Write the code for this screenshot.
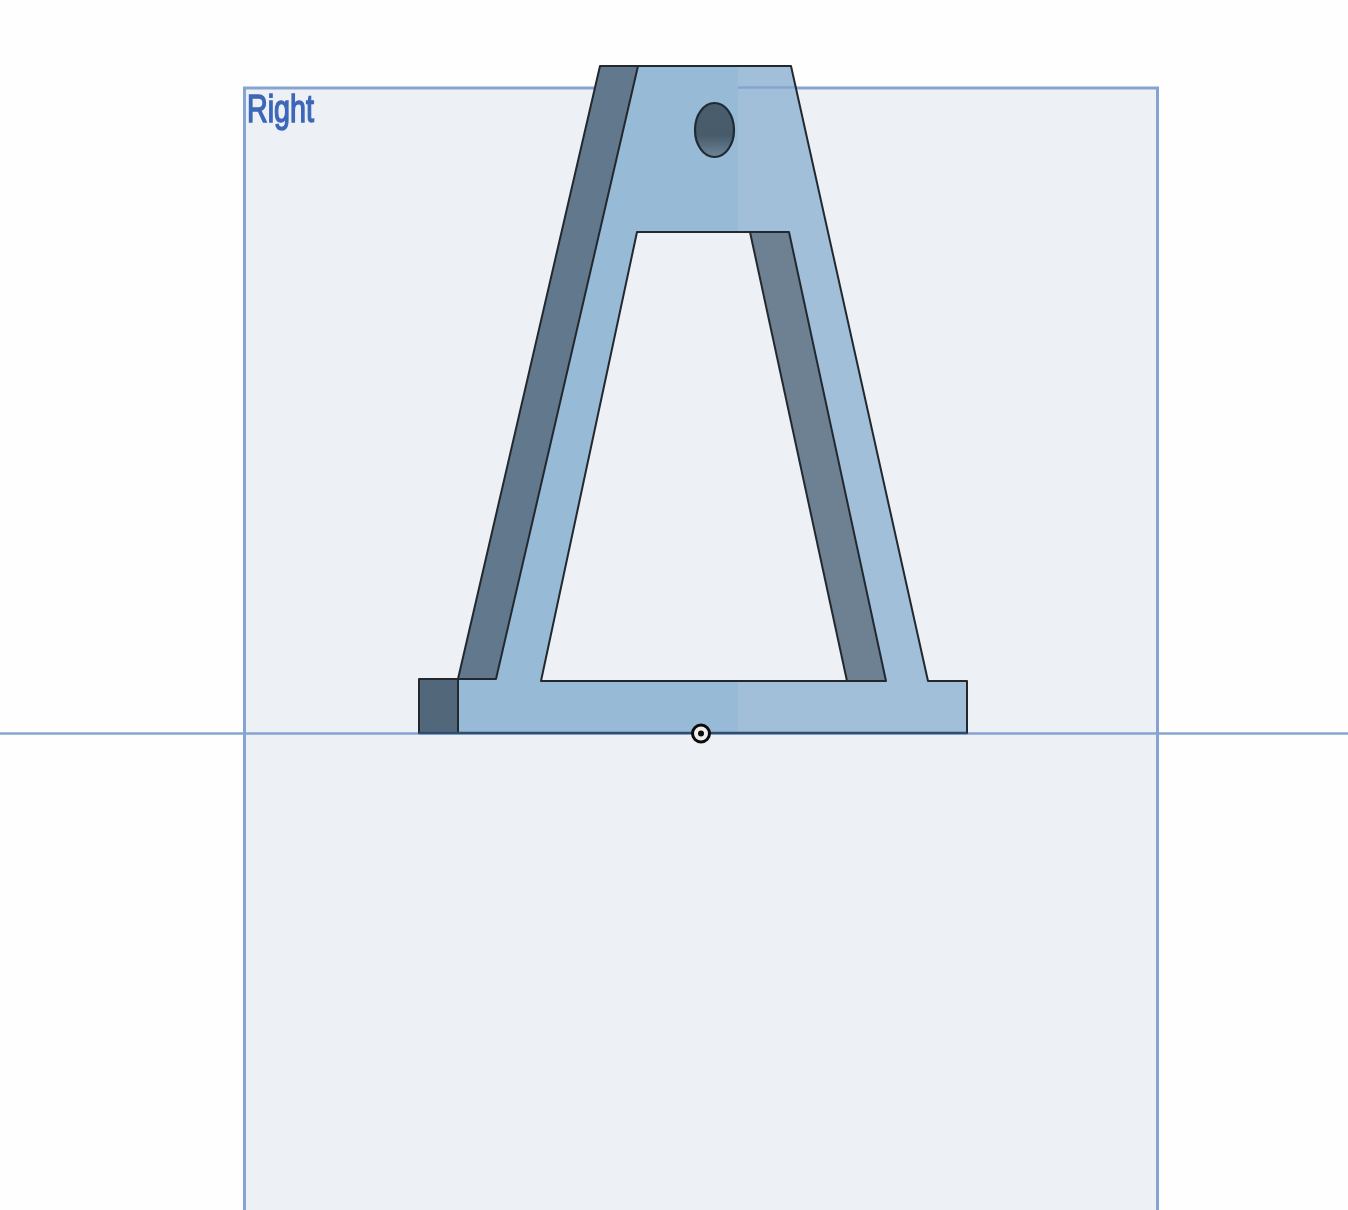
export default function App() {
  return (
    <div className="relative h-[1210px] w-full overflow-hidden bg-[#fefefe]">
      <svg width="1348" height="1210" viewBox="0 0 1348 1210" className="block">
        <defs>
          <filter id="soft" x="-5%" y="-5%" width="110%" height="110%" colorInterpolationFilters="sRGB">
            <feGaussianBlur stdDeviation="0.7" />
          </filter>
          <linearGradient id="hole" x1="0" y1="0" x2="0" y2="1">
            <stop offset="0" stopColor="#4a5d6c" />
            <stop offset="0.6" stopColor="#475b6b" />
            <stop offset="1" stopColor="#6d8699" />
          </linearGradient>
        </defs>
        <g filter="url(#soft)">
          {/* right plane */}
          <rect x="244.5" y="88" width="913" height="1130" fill="#edf0f5" stroke="#86a4d2" strokeWidth="3" />
          <line x1="0" y1="733.5" x2="1348" y2="733.5" stroke="#86a4d2" strokeWidth="2.5" />

          {/* front face */}
          <path d="M600 66H791L928 681H967V733H419V679H458Z" fill="#97bbd7" />
          <path d="M738 66H791L928 681H967V733H738Z" fill="#a1bfd8" />
          {/* window */}
          <path d="M637 232H789L886 681H541Z" fill="#edf0f5" />
          {/* side faces */}
          <path d="M600 66H638L496 679H458Z" fill="#62788c" />
          <path d="M419 679H458V733H419Z" fill="#52677a" />
          <path d="M750 232H789L886 681H847Z" fill="#6e8192" />
          {/* plane edge drawn over the part */}
          <line x1="738" y1="87.500" x2="797" y2="87.500" stroke="#86a4d2" strokeWidth="2.500" />

          {/* part edges */}
          <g fill="none" stroke="#22282e" strokeWidth="2" strokeLinejoin="round">
            <path d="M600 66H791L928 681H967V733H419V679H458Z" />
            <path d="M638 66L496 679H458" />
            <path d="M458 679V733" />
            <path d="M637 232H789L886 681H541Z" />
            <path d="M750 232L847 681" />
          </g>
          <line x1="419" y1="733" x2="967" y2="733" stroke="#2f4d73" strokeWidth="2.500" />
          <ellipse cx="714.500" cy="130" rx="19.500" ry="27" fill="url(#hole)" stroke="#1f2a33" strokeWidth="2.200" />

          {/* origin */}
          <circle cx="701" cy="733.500" r="8.500" fill="#eeeeee" stroke="#0c0c0c" strokeWidth="3" />
          <circle cx="701" cy="733.500" r="3" fill="#0c0c0c" />

          <text
            x="247"
            y="122"
            textLength="67"
            lengthAdjust="spacingAndGlyphs"
            fontFamily="'Liberation Sans', Arial, sans-serif"
            fontSize="39"
            fill="#3d67b8"
            stroke="#3d67b8"
            strokeWidth="1.500"
          >
            Right
          </text>
        </g>
      </svg>
    </div>
  );
}
